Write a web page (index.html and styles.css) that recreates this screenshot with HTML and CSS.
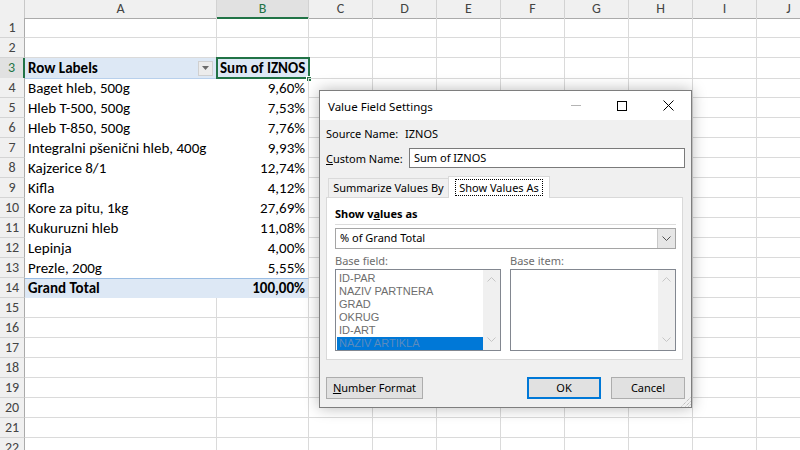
FILE: index.html
```html
<!DOCTYPE html>
<html>
<head>
<meta charset="utf-8">
<title>Value Field Settings</title>
<link rel="stylesheet" href="styles.css">
</head>
<body>
<div class="sheet">
  <div class="row hdr">
    <div class="corner"></div>
    <div class="ch">A</div><div class="ch sel">B</div><div class="ch">C</div><div class="ch">D</div><div class="ch">E</div><div class="ch">F</div><div class="ch">G</div><div class="ch">H</div><div class="ch">I</div><div class="ch">J</div>
  </div>
  <div class="row"><div class="rh">1</div><div class="c"></div><div class="c"></div><div class="c"></div><div class="c"></div><div class="c"></div><div class="c"></div><div class="c"></div><div class="c"></div><div class="c"></div><div class="c"></div></div>
  <div class="row"><div class="rh">2</div><div class="c"></div><div class="c"></div><div class="c"></div><div class="c"></div><div class="c"></div><div class="c"></div><div class="c"></div><div class="c"></div><div class="c"></div><div class="c"></div></div>
  <div class="row"><div class="rh sel">3</div><div class="c pa ph"><span>Row Labels</span><span class="filter"><svg width="7" height="4" viewBox="0 0 7 4"><path d="M0 0H7L3.5 4Z" fill="#6a6a6a"/></svg></span></div><div class="c pb ph"><span>Sum of IZNOS</span><span class="selbox"></span><span class="handle"></span></div><div class="c"></div><div class="c"></div><div class="c"></div><div class="c"></div><div class="c"></div><div class="c"></div><div class="c"></div><div class="c"></div></div>
  <div class="row"><div class="rh">4</div><div class="c pa">Baget hleb, 500g</div><div class="c pb num">9,60%</div><div class="c"></div><div class="c"></div><div class="c"></div><div class="c"></div><div class="c"></div><div class="c"></div><div class="c"></div><div class="c"></div></div>
  <div class="row"><div class="rh">5</div><div class="c pa">Hleb T-500, 500g</div><div class="c pb num">7,53%</div><div class="c"></div><div class="c"></div><div class="c"></div><div class="c"></div><div class="c"></div><div class="c"></div><div class="c"></div><div class="c"></div></div>
  <div class="row"><div class="rh">6</div><div class="c pa">Hleb T-850, 500g</div><div class="c pb num">7,76%</div><div class="c"></div><div class="c"></div><div class="c"></div><div class="c"></div><div class="c"></div><div class="c"></div><div class="c"></div><div class="c"></div></div>
  <div class="row"><div class="rh">7</div><div class="c pa">Integralni pšenični hleb, 400g</div><div class="c pb num">9,93%</div><div class="c"></div><div class="c"></div><div class="c"></div><div class="c"></div><div class="c"></div><div class="c"></div><div class="c"></div><div class="c"></div></div>
  <div class="row"><div class="rh">8</div><div class="c pa">Kajzerice 8/1</div><div class="c pb num">12,74%</div><div class="c"></div><div class="c"></div><div class="c"></div><div class="c"></div><div class="c"></div><div class="c"></div><div class="c"></div><div class="c"></div></div>
  <div class="row"><div class="rh">9</div><div class="c pa">Kifla</div><div class="c pb num">4,12%</div><div class="c"></div><div class="c"></div><div class="c"></div><div class="c"></div><div class="c"></div><div class="c"></div><div class="c"></div><div class="c"></div></div>
  <div class="row"><div class="rh">10</div><div class="c pa">Kore za pitu, 1kg</div><div class="c pb num">27,69%</div><div class="c"></div><div class="c"></div><div class="c"></div><div class="c"></div><div class="c"></div><div class="c"></div><div class="c"></div><div class="c"></div></div>
  <div class="row"><div class="rh">11</div><div class="c pa">Kukuruzni hleb</div><div class="c pb num">11,08%</div><div class="c"></div><div class="c"></div><div class="c"></div><div class="c"></div><div class="c"></div><div class="c"></div><div class="c"></div><div class="c"></div></div>
  <div class="row"><div class="rh">12</div><div class="c pa">Lepinja</div><div class="c pb num">4,00%</div><div class="c"></div><div class="c"></div><div class="c"></div><div class="c"></div><div class="c"></div><div class="c"></div><div class="c"></div><div class="c"></div></div>
  <div class="row"><div class="rh">13</div><div class="c pa">Prezle, 200g</div><div class="c pb num">5,55%</div><div class="c"></div><div class="c"></div><div class="c"></div><div class="c"></div><div class="c"></div><div class="c"></div><div class="c"></div><div class="c"></div></div>
  <div class="row"><div class="rh">14</div><div class="c pa pt">Grand Total</div><div class="c pb pt num">100,00%</div><div class="c"></div><div class="c"></div><div class="c"></div><div class="c"></div><div class="c"></div><div class="c"></div><div class="c"></div><div class="c"></div></div>
  <div class="row"><div class="rh">15</div><div class="c"></div><div class="c"></div><div class="c"></div><div class="c"></div><div class="c"></div><div class="c"></div><div class="c"></div><div class="c"></div><div class="c"></div><div class="c"></div></div>
  <div class="row"><div class="rh">16</div><div class="c"></div><div class="c"></div><div class="c"></div><div class="c"></div><div class="c"></div><div class="c"></div><div class="c"></div><div class="c"></div><div class="c"></div><div class="c"></div></div>
  <div class="row"><div class="rh">17</div><div class="c"></div><div class="c"></div><div class="c"></div><div class="c"></div><div class="c"></div><div class="c"></div><div class="c"></div><div class="c"></div><div class="c"></div><div class="c"></div></div>
  <div class="row"><div class="rh">18</div><div class="c"></div><div class="c"></div><div class="c"></div><div class="c"></div><div class="c"></div><div class="c"></div><div class="c"></div><div class="c"></div><div class="c"></div><div class="c"></div></div>
  <div class="row"><div class="rh">19</div><div class="c"></div><div class="c"></div><div class="c"></div><div class="c"></div><div class="c"></div><div class="c"></div><div class="c"></div><div class="c"></div><div class="c"></div><div class="c"></div></div>
  <div class="row"><div class="rh">20</div><div class="c"></div><div class="c"></div><div class="c"></div><div class="c"></div><div class="c"></div><div class="c"></div><div class="c"></div><div class="c"></div><div class="c"></div><div class="c"></div></div>
  <div class="row"><div class="rh">21</div><div class="c"></div><div class="c"></div><div class="c"></div><div class="c"></div><div class="c"></div><div class="c"></div><div class="c"></div><div class="c"></div><div class="c"></div><div class="c"></div></div>
  <div class="row"><div class="rh">22</div><div class="c"></div><div class="c"></div><div class="c"></div><div class="c"></div><div class="c"></div><div class="c"></div><div class="c"></div><div class="c"></div><div class="c"></div><div class="c"></div></div>
</div>

<div class="dlg">
  <div class="title">
    <div class="title-text">Value Field Settings</div>
    <div class="cap"><svg width="10" height="1" viewBox="0 0 10 1"><rect width="10" height="1" fill="#b4b4b4"/></svg></div>
    <div class="cap"><svg width="10" height="10" viewBox="0 0 10 10"><rect x="0.5" y="0.5" width="9" height="9" fill="none" stroke="#000"/></svg></div>
    <div class="cap"><svg width="11" height="11" viewBox="0 0 11 11"><path d="M0.5 0.5L10.5 10.5M10.5 0.5L0.5 10.5" stroke="#000" stroke-width="1"/></svg></div>
  </div>
  <div class="dbody">
    <div class="src"><span class="lbl">Source Name:</span><span>IZNOS</span></div>
    <div class="custom"><span class="lbl2"><u>C</u>ustom Name:</span><div class="input">Sum of IZNOS</div></div>
    <div class="tabs">
      <div class="tab">Summarize Values By</div>
      <div class="tab active"><span class="focus">Show Values As</span></div>
    </div>
    <div class="panel">
      <div class="sva">Show v<u>a</u>lues as</div>
      <div class="sep"></div>
      <div class="combo"><span class="combo-text">% of Grand Total</span><span class="dd"><svg width="9" height="5" viewBox="0 0 9 5"><path d="M0.5 0.5L4.5 4.5L8.5 0.5" fill="none" stroke="#505050"/></svg></span></div>
      <div class="lists">
        <div class="col">
          <div class="lblg">Base field:</div>
          <div class="lb">
            <div class="items">
              <div class="it">ID-PAR</div>
              <div class="it">NAZIV PARTNERA</div>
              <div class="it">GRAD</div>
              <div class="it">OKRUG</div>
              <div class="it">ID-ART</div>
              <div class="it sel">NAZIV ARTIKLA</div>
            </div>
            <div class="sb">
              <svg width="9" height="5" viewBox="0 0 9 5"><path d="M0.5 4.5L4.5 0.5L8.5 4.5" fill="none" stroke="#c6c6c6"/></svg>
              <svg width="9" height="5" viewBox="0 0 9 5"><path d="M0.5 0.5L4.5 4.5L8.5 0.5" fill="none" stroke="#c6c6c6"/></svg>
            </div>
          </div>
        </div>
        <div class="col">
          <div class="lblg">Base item:</div>
          <div class="lb">
            <div class="items"></div>
            <div class="sb">
              <svg width="9" height="5" viewBox="0 0 9 5"><path d="M0.5 4.5L4.5 0.5L8.5 4.5" fill="none" stroke="#c6c6c6"/></svg>
              <svg width="9" height="5" viewBox="0 0 9 5"><path d="M0.5 0.5L4.5 4.5L8.5 0.5" fill="none" stroke="#c6c6c6"/></svg>
            </div>
          </div>
        </div>
      </div>
    </div>
    <div class="btns">
      <div class="btn nf"><u>N</u>umber Format</div>
      <div class="btn ok">OK</div>
      <div class="btn cancel">Cancel</div>
    </div>
    <svg class="grip" width="11" height="11" viewBox="0 0 11 11"><path d="M10.5 1.5L1.5 10.5M10.5 5.5L5.5 10.5M10.5 8.5L8.5 10.5" stroke="#a8a8a8" stroke-width="1" stroke-dasharray="1 1"/></svg>
  </div>
</div>
</body>
</html>
```

FILE: styles.css
```css
* { box-sizing: border-box; }
html, body { margin: 0; padding: 0; }
body {
  width: 800px;
  height: 450px;
  overflow: hidden;
  position: relative;
  background: #fff;
  font-family: Carlito, Calibri, Lato, "Liberation Sans", sans-serif;
  font-size: 15px;
  color: #000;
}

/* ---------- spreadsheet ---------- */
.sheet { display: flex; flex-direction: column; }
.row {
  display: grid;
  grid-template-columns: 25px 192px 92px repeat(8, 64px);
  height: 20px;
}
.row.hdr { height: 18px; }
.corner {
  background: #f0f0f0;
  border-right: 1px solid #c8c8c8;
  border-bottom: 1px solid #ababab;
}
.ch {
  background: #f0f0f0;
  border-right: 1px solid #d2d2d2;
  border-bottom: 1px solid #ababab;
  text-align: center;
  color: #444;
  font-size: 14px;
  line-height: 17px;
}
.ch.sel {
  background: #e1e1e1;
  color: #217346;
  border-bottom: 2px solid #217346;
}
.rh {
  background: #f0f0f0;
  border-right: 1px solid #ababab;
  border-bottom: 1px solid #d4d4d4;
  text-align: center;
  color: #444;
  font-size: 14px;
  line-height: 19px;
}
.rh.sel {
  background: #e1e1e1;
  color: #217346;
  border-right: 2px solid #217346;
}
.c {
  border-right: 1px solid #dadada;
  border-bottom: 1px solid #dadada;
  line-height: 20px;
  padding: 0 3px;
  white-space: nowrap;
  position: relative;
}
.c.pa { border-right: none; border-bottom: none; }
.c.pb { border-bottom: none; }
.c.num { text-align: right; }
.c.ph {
  background: #dde8f5;
  border-bottom: 1px solid #b8d0ec;
  font-weight: bold;
  display: flex;
  align-items: center;
  justify-content: space-between;
}
.c.pb.ph { padding-left: 3px; }
.c.pt {
  background: #dde8f5;
  border-top: 1px solid #9bbde3;
  font-weight: bold;
  line-height: 19px;
}
.filter {
  width: 15px;
  height: 15px;
  background: #ececec;
  border: 1px solid #d0d0d0;
  display: flex;
  align-items: center;
  justify-content: center;
  margin-right: 1px;
}
.selbox {
  position: absolute;
  left: -1px;
  top: -1px;
  right: -2px;
  bottom: -1px;
  border: 2px solid #217346;
}
.handle {
  position: absolute;
  right: -4px;
  bottom: -4px;
  width: 6px;
  height: 6px;
  background: #217346;
  border: 1px solid #fff;
}

/* ---------- dialog ---------- */
.dlg {
  position: absolute;
  left: 319px;
  top: 90px;
  width: 373px;
  height: 318px;
  border: 1px solid #7e7e7e;
  background: #f0f0f0;
  box-shadow: 0 0 14px rgba(0, 0, 0, 0.28);
  font-family: "Segoe UI", "Noto Sans", "Open Sans", sans-serif;
  font-size: 11px;
  color: #000;
  white-space: nowrap;
  display: flex;
  flex-direction: column;
}
.title {
  height: 29px;
  background: #fff;
  display: flex;
  align-items: center;
}
.title-text { flex: 1; padding-left: 8px; padding-top: 1px; font-size: 11.5px; }
.cap {
  width: 46px;
  height: 29px;
  display: flex;
  align-items: center;
  justify-content: center;
}
.dbody {
  flex: 1;
  position: relative;
  padding: 6px 6px 0 6px;
}
.src { height: 16px; line-height: 16px; display: flex; }
.lbl { width: 79px; }
.custom {
  margin-top: 6px;
  display: flex;
  align-items: center;
  height: 20px;
}
.lbl2 { width: 83px; }
.input {
  width: 276px;
  height: 20px;
  background: #fff;
  border: 1px solid #7a7a7a;
  padding-left: 4px;
  line-height: 17px;
}
.tabs {
  margin-top: 8px;
  height: 21px;
  display: flex;
  align-items: flex-end;
  padding-left: 2px;
}
.tab {
  width: 120px;
  height: 19px;
  border-top: 1px solid #dadada;
  border-left: 1px solid #dadada;
  text-align: center;
  line-height: 17px;
}
.tab.active {
  width: 102px;
  height: 22px;
  background: #fff;
  border: 1px solid #d9d9d9;
  border-bottom: none;
  margin-bottom: -1px;
  position: relative;
  z-index: 1;
  display: flex;
  align-items: center;
  justify-content: center;
}
.focus {
  border: 1px dotted #000;
  padding: 0 3px;
  line-height: 15px;
}
.panel {
  width: 357px;
  height: 163px;
  background: #fff;
  border: 1px solid #d9d9d9;
  padding: 8px 5px 0 8px;
}
.sva { font-weight: bold; line-height: 16px; }
.sep { margin-top: 2px; height: 1px; width: 341px; background: #dcdcdc; }
.combo {
  margin-top: 3px;
  width: 341px;
  height: 21px;
  border: 1px solid #a5a5a5;
  display: flex;
}
.combo-text { flex: 1; padding-left: 4px; line-height: 18px; }
.dd {
  width: 18px;
  background: #e6e6e6;
  border-left: 1px solid #c8c8c8;
  display: flex;
  align-items: center;
  justify-content: center;
}
.lists { margin-top: 5px; display: flex; gap: 9px; }
.col { width: 166px; }
.lblg { color: #6d6d6d; line-height: 14px; }
.lb {
  margin-top: 1px;
  height: 82px;
  background: #fff;
  border: 1px solid #828790;
  display: flex;
}
.items { flex: 1; padding: 2px 0 0 1px; }
.it {
  height: 13px;
  line-height: 13px;
  padding-left: 2px;
  color: #6d6d6d;
  font-family: "Liberation Sans", Arial, sans-serif;
  font-size: 11px;
}
.it.sel { background: #0078d7; color: #5b8bbd; }
.sb {
  width: 17px;
  background: #f0f0f0;
  display: flex;
  flex-direction: column;
  justify-content: space-between;
  align-items: center;
  padding: 7px 0 8px;
}
.btns { margin-top: 17px; display: flex; }
.btn {
  height: 22px;
  background: #e1e1e1;
  border: 1px solid #adadad;
  text-align: center;
  line-height: 19px;
}
.nf { width: 97px; }
.ok {
  width: 74px;
  margin-left: auto;
  border: 2px solid #0078d7;
  line-height: 17px;
}
.cancel { width: 74px; margin-left: 10px; }
.grip { position: absolute; right: 0; bottom: 0; }
```
